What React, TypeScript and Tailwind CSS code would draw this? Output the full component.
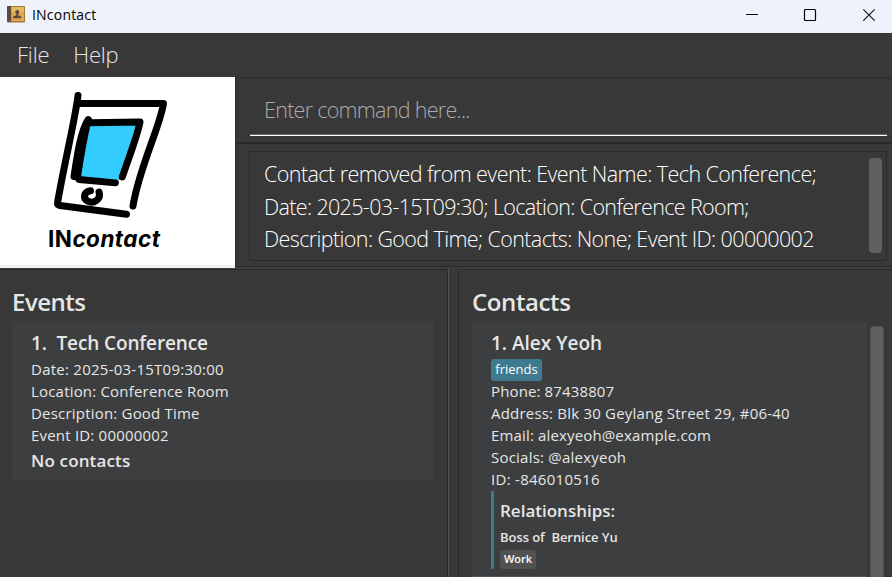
import React from "react";

function TitleBar() {
  return (
    <header className="flex h-[33px] shrink-0 items-center bg-[#eef3fb] text-black">
      <svg className="ml-[7px] mb-[5px] shrink-0" width="18" height="17" viewBox="0 0 18 17">
        <rect x="0" y="0" width="18" height="16.5" rx="1" fill="#a8783a" />
        <rect x="0" y="0" width="4" height="16" rx="1" fill="#5d4a41" />
        <rect x="4.5" y="1" width="12.5" height="14" fill="#dda94f" />
        <rect x="4.5" y="1" width="12.5" height="5" fill="#e6b967" />
        <circle cx="10.2" cy="6" r="2" fill="#5d4a3a" />
        <path d="M9.2 7h2v2.200l3 1.400v1.600H6.100v-1.600l3.100-1.400z" fill="#5d4a3a" />
      </svg>
      <span className="ml-[7px] mb-[3px] text-[14px] leading-5 tracking-[0.2px]">INcontact</span>
      <svg className="mb-[5px] ml-auto mr-[16px]" width="130" height="14" viewBox="0 0 130 14" fill="none" stroke="#111">
        <path d="M0 7.5h12" stroke="#000" />
        <rect x="58.5" y="2.5" width="11" height="11" rx="1" stroke="#000" strokeWidth="1.2" />
        <path d="M117.3 2.3l11.4 11.4M128.7 2.3l-11.4 11.4" strokeWidth="1.1" />
      </svg>
    </header>
  );
}

function Logo() {
  return (
    <div className="h-[191px] w-[235px] shrink-0 border-b-[3px] border-[#f3f3f3] bg-white">
      <svg width="235" height="188" viewBox="0 77 235 188" fill="none" stroke="#000" strokeLinecap="round" strokeLinejoin="round">
        <path d="M90 124L136 124L120 180L79 178Z" fill="#33ccff" stroke="none" />
        <path d="M78 95.500C76 115 64 165 57.500 203Q57 205 60 205.500L126.500 214.300" strokeWidth="7" />
        <path d="M79 103.500H163.500C160 127 139 168 133 206" strokeWidth="7" />
        <path d="M88.300 119.500C81 131 78 150 74 176.500L77.500 177C80 160 83 142 87.500 122Z" fill="#000" strokeWidth="7" />
        <path d="M89 122.800L140 122C137 137 128 160 122.300 177" strokeWidth="7" />
        <path d="M79 179.500L115.500 182.800" strokeWidth="6.800" />
        <path d="M90.500 190.700C84 191.500 82.500 198.500 87.500 201C93.500 204.500 101.500 199 99 192" strokeWidth="7" />
        <text x="48" y="246.500" fill="#000" stroke="none" fontSize="22.500" fontWeight="700" textLength="112" className="font-['Inter',sans-serif]">
          IN<tspan fontStyle="italic">contact</tspan>
        </text>
      </svg>
    </div>
  );
}

function CommandBox() {
  return (
    <div className="flex h-[67px] flex-col border-y-2 border-l border-t-[#303030] border-b-[#292929] border-l-[#2b2b2b] pl-[14px] pr-[5px]">
      <div className="border-b border-white">
        <div className="flex h-[56px] items-center border-b border-[#6a6a6a] pl-[14px] pt-[6px] text-[21.500px] font-light leading-7 tracking-[-0.72px] text-[#aaaaaa]">
          Enter command here...
        </div>
      </div>
    </div>
  );
}

function ResultBox() {
  return (
    <div className="h-[123px] border-b border-l border-[#2b2b2b] pl-[13px] pr-[5px] pt-[7px]">
      <div className="flex h-[110px] justify-between border border-[#2b2b2b] bg-[#383838] pl-[14px] pr-1 pt-[6px]">
        <div className="whitespace-nowrap text-[21.500px] font-light leading-[32.500px] text-white">
          <p className="tracking-[-0.57px]">Contact removed from event: Event Name: Tech Conference;</p>
          <p className="tracking-[-0.65px]">Date: 2025-03-15T09:30; Location: Conference Room;</p>
          <p className="tracking-[-0.61px]">Description: Good Time; Contacts: None; Event ID: 00000002</p>
        </div>
        <div className="h-[95px] w-[13px] rounded bg-[#606060]" />
      </div>
    </div>
  );
}

function EventsPane() {
  return (
    <section className="w-[448px] shrink-0 border-r border-t border-[#292929] pl-3 pt-[14px]">
      <h2 className="h-[37px] text-[24px] font-semibold leading-[35px] tracking-[-0.5px]">Events</h2>
      <div className="h-[159px] w-[422px] bg-[#3c3e3f] pl-[19px] pt-[8px] text-[15px]">
        <h3 className="mb-px whitespace-pre text-[19px] font-semibold leading-[28px] tracking-[-0.12px]">1.  Tech Conference</h3>
        <p className="leading-[22px] tracking-[0.25px]">Date: 2025-03-15T09:30:00</p>
        <p className="leading-[22px] tracking-[0.19px]">Location: Conference Room</p>
        <p className="leading-[22px] tracking-[0.2px]">Description: Good Time</p>
        <p className="leading-[22px] tracking-[0.2px]">Event ID: 00000002</p>
        <p className="mt-px text-[17px] font-semibold leading-[28px] tracking-[0.15px]">No contacts</p>
      </div>
    </section>
  );
}

function ContactsPane() {
  return (
    <section className="flex-1 border-l border-t border-[#292929] pl-[13px] pt-[14px]">
      <h2 className="h-[37px] text-[24px] font-semibold leading-[35px] tracking-[-0.4px]">Contacts</h2>
      <div className="flex">
        <div className="h-[256px] w-[395px] shrink-0 border-b border-[#54595b] bg-[#3c3e3f] pl-[19px] pt-[8px] text-[15px]">
          <h3 className="text-[19px] font-semibold leading-[28px]">1. Alex Yeoh</h3>
          <span className="mt-[2px] flex h-[22px] w-[51px] items-center justify-center rounded-[3px] bg-[#3e7b91] text-[13px] font-medium text-white">friends</span>
          <p className="leading-[21px] tracking-[0.13px]">Phone: 87438807</p>
          <p className="leading-[23px] tracking-[0.2px]">Address: Blk 30 Geylang Street 29, #06-40</p>
          <p className="leading-[21px] tracking-[0.15px]">Email: alexyeoh@example.com</p>
          <p className="leading-[22px] tracking-[0.22px]">Socials: @alexyeoh</p>
          <p className="leading-[23px] tracking-[0.28px]">ID: -846010516</p>
          <div className="h-[78px] border-l-[3px] border-[#3e7b91] pl-[6px] pt-[6px]">
            <h4 className="text-[17px] font-semibold leading-[27px]">Relationships:</h4>
            <p className="whitespace-pre text-[13px] font-semibold leading-[26px] tracking-[-0.06px]">Boss of  Bernice Yu</p>
            <span className="flex h-[19px] w-9 items-center justify-center rounded-[3px] bg-[#525252] text-[11px] font-semibold text-white">Work</span>
          </div>
        </div>
        <div className="ml-[3px] mt-[5px] w-[14px] rounded-t border border-b-0 border-[#525252] bg-[#606060]" />
      </div>
    </section>
  );
}

export default function App() {
  return (
    <div className="flex h-[577px] w-[892px] flex-col overflow-hidden bg-[#383838] font-['Open_Sans','Noto_Sans',sans-serif] text-[#e6e6e6]">
      <TitleBar />
      <nav className="flex h-[44px] shrink-0 gap-[24px] pl-[17px] pt-[5px] text-[22px] font-light leading-[32px] tracking-[-0.2px]">
        <span>File</span>
        <span>Help</span>
      </nav>
      <div className="flex h-[191px] shrink-0">
        <Logo />
        <div className="flex-1">
          <CommandBox />
          <ResultBox />
        </div>
      </div>
      <main className="flex h-[309px] shrink-0 border-t border-[#3f3f3f]">
        <EventsPane />
        <div className="w-[10px] shrink-0 border-l border-[#565656]" />
        <ContactsPane />
      </main>
    </div>
  );
}
